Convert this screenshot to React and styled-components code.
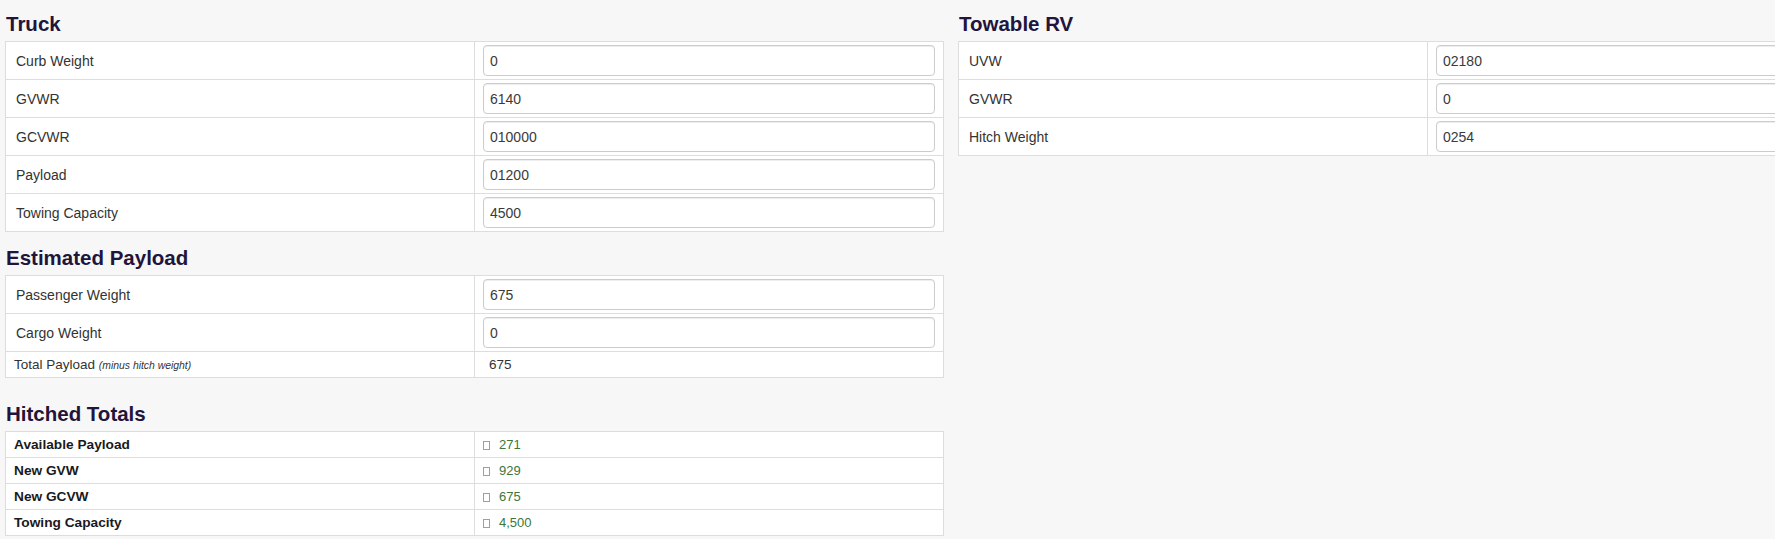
import styled, { createGlobalStyle } from "styled-components";

const GlobalStyle = createGlobalStyle`
  html, body {
    margin: 0;
    padding: 0;
    overflow: hidden;
    background: #f7f7f7;
    font-family: "Liberation Sans", Arial, sans-serif;
    color: #333;
  }
  * {
    box-sizing: border-box;
  }
`;

const Page = styled.div`
  display: grid;
  grid-template-columns: 939px 939px;
  column-gap: 14px;
  align-items: start;
  padding-left: 5px;
  width: 1900px;
`;

const Column = styled.div`
  display: flex;
  flex-direction: column;
`;

const Title = styled.h3`
  margin: ${(p) => p.$top}px 0 6px 1px;
  font-size: 20.5px;
  line-height: 22px;
  font-weight: 700;
  color: #22143a;
`;

const Table = styled.table`
  width: 100%;
  border-collapse: collapse;
  table-layout: fixed;
  background: #fff;
`;

const Cell = styled.td`
  width: 50%;
  border: 1px solid #dddddd;
  padding: 3px 8px;
  vertical-align: middle;
  font-size: ${(p) => p.$size || 14}px;
  line-height: ${(p) => (p.$size ? 19 : 20)}px;
  font-weight: ${(p) => (p.$bold ? 700 : 400)};
  color: ${(p) => (p.$bold ? "#1a1a1a" : "#333")};
`;

const Label = styled.span`
  display: block;
  padding-left: 2px;
`;

const Total = styled.span`
  display: block;
  padding-left: 6px;
`;

const Input = styled.input`
  display: block;
  width: 100%;
  height: 31px;
  padding: 0 6px;
  border: 1px solid #cccccc;
  border-radius: 4px;
  background: #fff;
  box-shadow: inset 0 1px 1px rgba(0, 0, 0, 0.075);
  font-family: "Liberation Sans", Arial, sans-serif;
  font-size: 14px;
  color: #3a3a3a;
  outline: none;
`;

const Note = styled.i`
  font-size: 10.4px;
  line-height: 1;
  color: #333;
`;

const Value = styled.span`
  color: #3c763d;
`;

const Glyph = styled.span`
  display: inline-block;
  width: 7px;
  height: 9px;
  border: 1px solid #9aa39a;
  margin-right: 9px;
  vertical-align: -1px;
`;

const truck = [
  ["Curb Weight", "0"],
  ["GVWR", "6140"],
  ["GCVWR", "010000"],
  ["Payload", "01200"],
  ["Towing Capacity", "4500"],
];

const towable = [
  ["UVW", "02180"],
  ["GVWR", "0"],
  ["Hitch Weight", "0254"],
];

const estimated = [
  ["Passenger Weight", "675"],
  ["Cargo Weight", "0"],
];

const hitched = [
  ["Available Payload", "271"],
  ["New GVW", "929"],
  ["New GCVW", "675"],
  ["Towing Capacity", "4,500"],
];

const InputRows = ({ rows }) =>
  rows.map(([label, value]) => (
    <tr key={label}>
      <Cell>
        <Label>{label}</Label>
      </Cell>
      <Cell>
        <Input type="text" defaultValue={value} />
      </Cell>
    </tr>
  ));

export default function App() {
  return (
    <>
      <GlobalStyle />
      <Page>
        <Column>
          <Title $top={13}>Truck</Title>
          <Table>
            <tbody>
              <InputRows rows={truck} />
            </tbody>
          </Table>

          <Title $top={15}>Estimated Payload</Title>
          <Table>
            <tbody>
              <InputRows rows={estimated} />
              <tr>
                <Cell $size={13.5}>
                  Total Payload <Note>(minus hitch weight)</Note>
                </Cell>
                <Cell $size={13.5}>
                  <Total>675</Total>
                </Cell>
              </tr>
            </tbody>
          </Table>

          <Title $top={25}>Hitched Totals</Title>
          <Table>
            <tbody>
              {hitched.map(([label, value]) => (
                <tr key={label}>
                  <Cell $size={13.7} $bold>
                    {label}
                  </Cell>
                  <Cell $size={13}>
                    <Value>
                      <Glyph />
                      {value}
                    </Value>
                  </Cell>
                </tr>
              ))}
            </tbody>
          </Table>
        </Column>

        <Column>
          <Title $top={13}>Towable RV</Title>
          <Table>
            <tbody>
              <InputRows rows={towable} />
            </tbody>
          </Table>
        </Column>
      </Page>
    </>
  );
}
